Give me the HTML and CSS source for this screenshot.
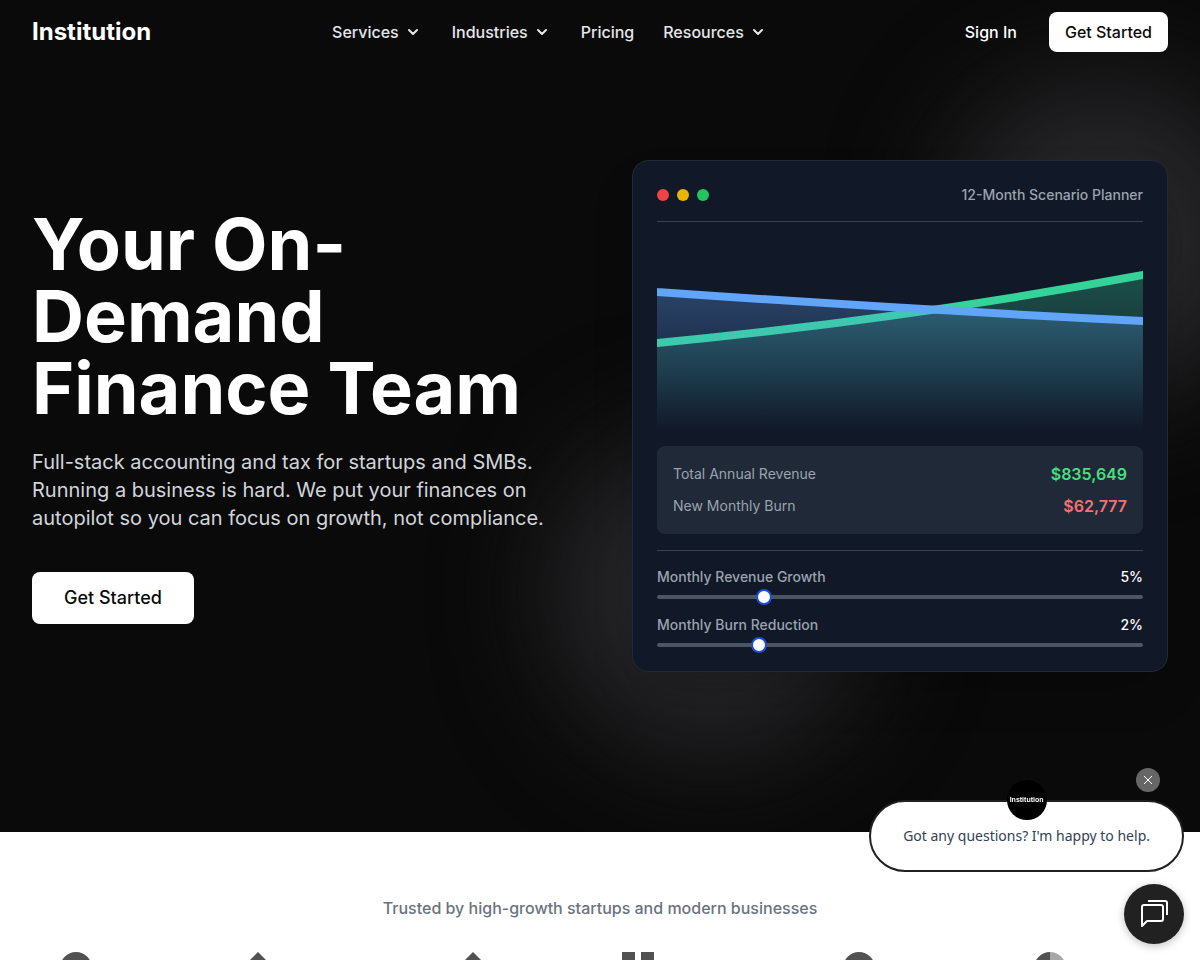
FILE: index.html
```html
<!DOCTYPE html>
<html lang="en">
<head>
  <meta charset="utf-8">
  <meta name="viewport" content="width=device-width, initial-scale=1">
  <title>Institution</title>
  <link rel="stylesheet" href="styles.css">
</head>
<body>
  <div class="hero">
    <div class="glow glow-top"></div>
    <div class="glow glow-bottom"></div>

    <header class="header">
      <a class="brand" href="#">Institution</a>
      <nav class="nav">
        <button class="nav-item" type="button">Services
          <svg class="chevron" viewBox="0 0 20 20" aria-hidden="true"><path d="M6 8l4 4 4-4"/></svg>
        </button>
        <button class="nav-item" type="button">Industries
          <svg class="chevron" viewBox="0 0 20 20" aria-hidden="true"><path d="M6 8l4 4 4-4"/></svg>
        </button>
        <a class="nav-item" href="#">Pricing</a>
        <button class="nav-item" type="button">Resources
          <svg class="chevron" viewBox="0 0 20 20" aria-hidden="true"><path d="M6 8l4 4 4-4"/></svg>
        </button>
      </nav>
      <div class="actions">
        <a class="sign-in" href="#">Sign In</a>
        <a class="button" href="#">Get Started</a>
      </div>
    </header>

    <main class="hero-grid">
      <div class="pitch">
        <h1 class="title">Your On-Demand Finance Team</h1>
        <p class="lead">Full-stack accounting and tax for startups and SMBs. Running a business is hard. We put your finances on autopilot so you can focus on growth, not compliance.</p>
        <a class="button button-large" href="#">Get Started</a>
      </div>

      <section class="card">
        <div class="card-head">
          <div class="dots">
            <span class="dot dot-red"></span>
            <span class="dot dot-yellow"></span>
            <span class="dot dot-green"></span>
          </div>
          <h2 class="card-title">12-Month Scenario Planner</h2>
        </div>

        <svg class="chart" viewBox="0 0 486 192" preserveAspectRatio="none" role="img" aria-label="Revenue and burn over twelve months">
          <defs>
            <linearGradient id="revenue" x1="0" y1="0" x2="0" y2="1">
              <stop offset="0" stop-color="#34d399" stop-opacity="0.3"/>
              <stop offset="1" stop-color="#34d399" stop-opacity="0"/>
            </linearGradient>
            <linearGradient id="burn" x1="0" y1="0" x2="0" y2="1">
              <stop offset="0" stop-color="#60a5fa" stop-opacity="0.3"/>
              <stop offset="1" stop-color="#60a5fa" stop-opacity="0"/>
            </linearGradient>
          </defs>
          <path fill="url(#revenue)" d="M0 105Q243 82 486 37V192H0Z"/>
          <path class="line" stroke="#34d399" d="M-9 106L0 105Q243 82 486 37L495 35"/>
          <path fill="url(#burn)" d="M0 54Q243 71 486 83V192H0Z"/>
          <path class="line" stroke="#60a5fa" d="M-9 53L0 54Q243 71 486 83L495 83"/>
        </svg>

        <dl class="totals">
          <div class="total">
            <dt>Total Annual Revenue</dt>
            <dd class="positive">$835,649</dd>
          </div>
          <div class="total">
            <dt>New Monthly Burn</dt>
            <dd class="negative">$62,777</dd>
          </div>
        </dl>

        <div class="controls">
          <div class="control">
            <div class="control-head">
              <label for="growth">Monthly Revenue Growth</label>
              <output for="growth">5%</output>
            </div>
            <input class="slider" id="growth" type="range" min="1" max="20" value="5">
          </div>
          <div class="control">
            <div class="control-head">
              <label for="reduction">Monthly Burn Reduction</label>
              <output for="reduction">2%</output>
            </div>
            <input class="slider" id="reduction" type="range" min="0" max="10" value="2">
          </div>
        </div>
      </section>
    </main>
  </div>

  <section class="trusted">
    <p class="trusted-text">Trusted by high-growth startups and modern businesses</p>
    <div class="logos">
      <svg class="logo" viewBox="0 0 32 32" aria-hidden="true"><circle cx="16" cy="16" r="16"/></svg>
      <svg class="logo" viewBox="0 0 32 32" aria-hidden="true"><path d="M16 0l16 16-16 16L0 16z"/></svg>
      <svg class="logo" viewBox="0 0 32 32" aria-hidden="true"><path d="M16 0l16 16-16 16L0 16z"/></svg>
      <svg class="logo" viewBox="0 0 32 32" aria-hidden="true"><path d="M0 0h13v13H0zM19 0h13v13H19zM0 19h13v13H0zM19 19h13v13H19z"/></svg>
      <svg class="logo" viewBox="0 0 32 32" aria-hidden="true"><circle cx="16" cy="16" r="16"/></svg>
      <svg class="logo" viewBox="0 0 32 32" aria-hidden="true"><path d="M16 0a16 16 0 000 32z"/><path opacity="0.5" d="M16 0a16 16 0 010 32z"/></svg>
    </div>
  </section>

  <aside class="chat">
    <button class="chat-close" type="button" aria-label="Close">
      <svg viewBox="0 0 24 24" aria-hidden="true"><path d="M8 8l8 8M16 8l-8 8"/></svg>
    </button>
    <div class="bubble">
      <span class="avatar">Institution</span>
      <p class="bubble-text">Got any questions? I'm happy to help.</p>
    </div>
    <button class="chat-open" type="button" aria-label="Open chat">
      <svg viewBox="0 0 60 60" aria-hidden="true">
        <path d="M20 21h17a2 2 0 012 2v12a2 2 0 01-2 2H23l-5 5V23a2 2 0 012-2z"/>
        <path d="M24 17h17a2 2 0 012 2v12"/>
      </svg>
    </button>
  </aside>
</body>
</html>
```

FILE: styles.css
```css
*,
*::before,
*::after {
  box-sizing: border-box;
}

body {
  margin: 0;
  background: #fff;
  color: #0a0a0a;
  font-family: Inter, sans-serif;
  font-size: 16px;
  line-height: 24px;
}

h1, h2, p, dl, dd {
  margin: 0;
}

a {
  color: inherit;
  text-decoration: none;
}

button {
  padding: 0;
  border: 0;
  background: none;
  color: inherit;
  font: inherit;
  cursor: pointer;
}

.hero {
  position: relative;
  overflow: hidden;
  background: #0a0a0a;
  color: #fff;
}

.glow {
  position: absolute;
  width: 320px;
  height: 320px;
  border-radius: 50%;
  background: #27272a;
  filter: blur(56px);
}

.glow-top {
  top: 80px;
  right: -64px;
}

.glow-bottom {
  bottom: 80px;
  left: 552px;
}

.header {
  position: relative;
  display: flex;
  align-items: center;
  justify-content: space-between;
  height: 64px;
  padding: 0 32px;
  font-weight: 500;
}

.brand {
  font-size: 24px;
  font-weight: 700;
  line-height: 32px;
}

.nav {
  display: flex;
  align-items: center;
  gap: 29px;
  color: #e5e7eb;
}

.nav-item {
  display: flex;
  align-items: center;
  gap: 4px;
}

.chevron {
  width: 20px;
  height: 20px;
  fill: none;
  stroke: currentColor;
  stroke-width: 2;
  stroke-linecap: round;
  stroke-linejoin: round;
}

.actions {
  display: flex;
  align-items: center;
  gap: 16px;
}

.sign-in {
  padding: 8px 16px;
}

.button {
  padding: 8px 16px;
  border-radius: 8px;
  background: #fff;
  color: #0a0a0a;
  font-weight: 500;
}

.hero-grid {
  position: relative;
  display: grid;
  grid-template-columns: 1fr 1fr;
  align-items: center;
  gap: 64px;
  padding: 96px 32px 160px;
}

.pitch {
  display: flex;
  flex-direction: column;
  align-items: flex-start;
}

.title {
  font-size: 72px;
  font-weight: 700;
  line-height: 72px;
}

.lead {
  margin-top: 24px;
  color: #d1d5db;
  font-size: 20px;
  line-height: 28px;
}

.button-large {
  margin-top: 40px;
  padding: 12px 32px;
  font-size: 18px;
  line-height: 28px;
}

.card {
  padding: 24px;
  border: 1px solid #1f2937;
  border-radius: 16px;
  background: #111827;
  box-shadow: 0 24px 48px -12px rgba(0, 0, 0, 0.25);
  font-size: 14px;
  line-height: 20px;
}

.card-head {
  display: flex;
  align-items: center;
  justify-content: space-between;
  padding-bottom: 16px;
  border-bottom: 1px solid #374151;
}

.dots {
  display: flex;
  gap: 8px;
}

.dot {
  width: 12px;
  height: 12px;
  border-radius: 50%;
}

.dot-red {
  background: #ef4444;
}

.dot-yellow {
  background: #eab308;
}

.dot-green {
  background: #22c55e;
}

.card-title {
  color: #9ca3af;
  font-size: 14px;
  font-weight: 500;
  line-height: 20px;
}

.chart {
  display: block;
  width: 100%;
  height: 192px;
  margin: 16px 0;
}

.line {
  fill: none;
  stroke-width: 8;
}

.totals {
  display: grid;
  gap: 8px;
  padding: 16px;
  border-radius: 8px;
  background: #1f2937;
}

.total {
  display: flex;
  align-items: center;
  justify-content: space-between;
  color: #9ca3af;
}

.total dd {
  font-size: 16px;
  font-weight: 600;
  line-height: 24px;
}

.total .positive {
  color: #4ade80;
}

.total .negative {
  color: #f87171;
}

.controls {
  display: grid;
  gap: 16px;
  margin-top: 16px;
  padding-top: 16px;
  border-top: 1px solid #374151;
  font-weight: 500;
}

.control {
  display: grid;
  gap: 8px;
}

.control-head {
  display: flex;
  justify-content: space-between;
}

.control-head label {
  color: #9ca3af;
}

.slider {
  appearance: none;
  display: block;
  width: 100%;
  height: 4px;
  margin: 0;
  border-radius: 2px;
  background: #4b5563;
}

.slider::-webkit-slider-thumb {
  appearance: none;
  width: 16px;
  height: 16px;
  border: 2px solid #1d4ed8;
  border-radius: 50%;
  background: #fff;
}

.trusted {
  padding: 64px 32px;
}

.trusted-text {
  color: #6b7280;
  font-weight: 500;
  text-align: center;
}

.logos {
  display: grid;
  grid-template-columns: 182fr 215fr 165fr 221fr 191fr 134fr;
  margin-top: 32px;
  padding-left: 28px;
}

.logo {
  width: 32px;
  height: 32px;
  fill: #525252;
}

.chat {
  position: fixed;
  right: 16px;
  bottom: 16px;
  display: flex;
  flex-direction: column;
  align-items: flex-end;
}

.chat-close {
  width: 24px;
  height: 24px;
  margin: 0 24px 8px 0;
  border-radius: 50%;
  background: #666;
}

.chat-close svg {
  display: block;
  fill: none;
  stroke: #fff;
  stroke-width: 1;
}

.bubble {
  position: relative;
  margin-bottom: 12px;
  padding: 24px 32px;
  border: 2px solid #212121;
  border-radius: 36px;
  background: #fff;
}

.avatar {
  position: absolute;
  top: -22px;
  left: calc(50% - 20px);
  width: 40px;
  height: 40px;
  border-radius: 50%;
  background: #000;
  color: #fff;
  font-family: "Liberation Sans", sans-serif;
  font-size: 7px;
  font-weight: 700;
  line-height: 40px;
  text-align: center;
}

.bubble-text {
  color: #334155;
  font-family: "Noto Sans", sans-serif;
  font-size: 14px;
  line-height: 20px;
}

.chat-open {
  width: 60px;
  height: 60px;
  border-radius: 50%;
  background: #212121;
  box-shadow: 0 2px 8px rgba(0, 0, 0, 0.25);
}

.chat-open svg {
  display: block;
  fill: none;
  stroke: #fff;
  stroke-width: 2;
  stroke-linejoin: round;
}
```
